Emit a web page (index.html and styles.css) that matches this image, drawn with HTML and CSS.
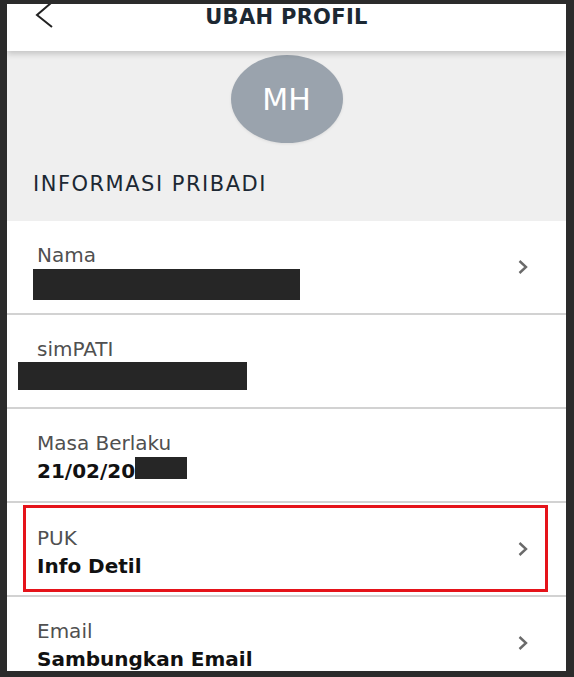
FILE: index.html
```html
<!DOCTYPE html>
<html lang="id">
<head>
    <meta charset="UTF-8">
    <meta name="viewport" content="width=device-width, initial-scale=1.0">
    <title>Ubah Profil</title>
    <link rel="stylesheet" href="styles.css">
</head>
<body>

    <div class="screen">
        <!-- Top bar with back button -->
        <div class="topbar">
            <svg class="back" width="20" height="28" viewBox="0 0 20 28">
                <polyline points="16,1 2,13 17,25" fill="none" stroke="#222" stroke-width="2"/>
            </svg>
            <div class="title">UBAH PROFIL</div>
            <div></div>
        </div>

        <!-- Avatar + section heading -->
        <div class="profile-head">
            <div class="avatar">MH</div>
            <h2 class="section-title">INFORMASI PRIBADI</h2>
        </div>

        <div class="list">
            <div class="row">
                <div class="row-text">
                    <div class="label">Nama</div>
                    <div class="redact redact-name"></div>
                </div>
                <svg class="chev" width="12" height="16" viewBox="0 0 12 16">
                    <polyline points="2.5,2 9,8 2.5,14" fill="none" stroke="#6a6a6a" stroke-width="2.4"/>
                </svg>
            </div>

            <div class="row">
                <div class="row-text">
                    <div class="label">simPATI</div>
                    <div class="redact redact-sim"></div>
                </div>
            </div>

            <div class="row">
                <div class="row-text">
                    <div class="label">Masa Berlaku</div>
                    <div class="value">21/02/20<span class="redact-inline"></span></div>
                </div>
            </div>

            <div class="row row-flag">
                <div class="flag-box">
                    <div class="row-text">
                        <div class="label">PUK</div>
                        <div class="value">Info Detil</div>
                    </div>
                    <svg class="chev" width="12" height="16" viewBox="0 0 12 16">
                        <polyline points="2.5,2 9,8 2.5,14" fill="none" stroke="#6a6a6a" stroke-width="2.4"/>
                    </svg>
                </div>
            </div>

            <div class="row">
                <div class="row-text">
                    <div class="label">Email</div>
                    <div class="value">Sambungkan Email</div>
                </div>
                <svg class="chev" width="12" height="16" viewBox="0 0 12 16">
                    <polyline points="2.5,2 9,8 2.5,14" fill="none" stroke="#6a6a6a" stroke-width="2.4"/>
                </svg>
            </div>
        </div>
    </div>

</body>
</html>
```

FILE: styles.css
```css
body {
    margin: 0;
    padding: 0;
    background-color: #2b2b2b;
    font-family: 'DejaVu Sans', Verdana, sans-serif;
}

.screen {
    margin: 4px 8px 0 7px;
    height: 667px;
    overflow: hidden;
    background-color: #efefef;
}

/* header */
.topbar {
    height: 47px;
    background-color: #fff;
    box-shadow: 0 3px 6px rgba(0, 0, 0, 0.18);
    position: relative;
    z-index: 1;
    display: grid;
    grid-template-columns: 1fr auto 1fr;
    align-items: start;
}

.back {
    margin: -2px 0 0 28px;
}

.title {
    font-size: 21px;
    font-weight: bold;
    line-height: 24px;
    padding-top: 1px;
    letter-spacing: 0.3px;
    color: #1c2833;
}

.profile-head {
    padding-top: 4px;
}

.avatar {
    width: 112px;
    height: 88px;
    margin: 0 auto;
    border-radius: 50%;
    background-color: #9aa3ad;
    color: #fff;
    font-size: 30px;
    display: flex;
    justify-content: center;
    align-items: center;
    box-shadow: 0 1px 3px rgba(0, 0, 0, 0.08);
}

.section-title {
    margin: 29px 0 0;
    padding: 0 0 24px 26px;
    font-size: 21px;
    font-weight: normal;
    line-height: 25px;
    letter-spacing: 1.5px;
    color: #1c2833;
}

/* rows */
.list {
    background-color: #fff;
}

.row {
    height: 94px;
    box-sizing: border-box;
    padding: 0 37px 0 30px;
    border-bottom: 2px solid #d2d2d2;
    display: flex;
    align-items: center;
}

.row-text {
    flex: 1;
    align-self: flex-start;
    padding-top: 20px;
}

.label {
    font-size: 20px;
    line-height: 28px;
    color: #505050;
}

.value {
    font-size: 20px;
    font-weight: bold;
    line-height: 28px;
    color: #111;
}

.redact {
    background-color: #262626;
}

.redact-name {
    width: 267px;
    height: 31px;
    margin-left: -4px;
}

.redact-sim {
    width: 229px;
    height: 28px;
    margin: -1px 0 0 -19px;
}

.redact-inline {
    display: inline-block;
    width: 52px;
    height: 22px;
    vertical-align: top;
    background-color: #262626;
}

.chev {
    flex-shrink: 0;
}

/* highlighted PUK row */
.row-flag {
    padding: 2px 18px 3px 16px;
}

.flag-box {
    flex: 1;
    align-self: stretch;
    display: flex;
    align-items: center;
    border: 3px solid #e5131a;
    padding: 0 16px 0 11px;
}

.flag-box .row-text {
    padding-top: 16px;
}
```
